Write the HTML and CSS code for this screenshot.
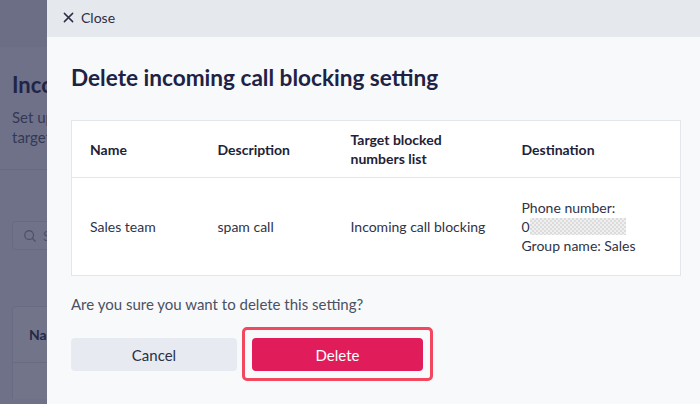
FILE: index.html
```html
<!DOCTYPE html>
<html lang="en">
<head>
<meta charset="utf-8">
<title>Delete incoming call blocking setting</title>
<link rel="stylesheet" href="styles.css">
</head>
<body>
<div class="page">
  <header class="page-header"></header>
  <main class="page-main">
    <h1 class="page-title">Incoming call blocking</h1>
    <p class="page-desc">Set up incoming call blocking<br>target blocked numbers list.</p>
    <hr class="page-sep">
    <div class="search">
      <svg class="search-icon" viewBox="0 0 16 16" width="14" height="14"><circle cx="7" cy="7" r="5" fill="none" stroke="#9aa0ad" stroke-width="1.5"/><path d="M10.6 10.6 L14 14" stroke="#9aa0ad" stroke-width="1.5" stroke-linecap="round"/></svg>
      <span class="search-ph">Search</span>
    </div>
    <div class="page-card">
      <div class="page-card-head">Name</div>
    </div>
  </main>
</div>
<div class="overlay"></div>
<section class="modal">
  <div class="modal-top">
    <button class="close-btn">
      <svg viewBox="0 0 12 12" width="11" height="11"><path d="M1.5 1.5 L10.5 10.5 M10.5 1.5 L1.5 10.5" stroke="#2b2f45" stroke-width="1.6" stroke-linecap="round"/></svg>
      <span>Close</span>
    </button>
  </div>
  <div class="modal-body">
    <h2 class="modal-title">Delete incoming call blocking setting</h2>
    <table class="info-table">
      <colgroup>
        <col class="c1"><col class="c2"><col class="c3"><col class="c4">
      </colgroup>
      <thead>
        <tr>
          <th>Name</th>
          <th>Description</th>
          <th>Target blocked<br>numbers list</th>
          <th>Destination</th>
        </tr>
      </thead>
      <tbody>
        <tr>
          <td>Sales team</td>
          <td>spam call</td>
          <td>Incoming call blocking</td>
          <td>Phone number:<br>0<span class="redacted"></span><br>Group name: Sales</td>
        </tr>
      </tbody>
    </table>
    <p class="question">Are you sure you want to delete this setting?</p>
    <div class="actions">
      <button class="btn btn-cancel">Cancel</button>
      <button class="btn btn-delete">Delete</button>
    </div>
  </div>
</section>
</body>
</html>
```

FILE: styles.css
```css
html, body {
  margin: 0;
  padding: 0;
}
body {
  width: 700px;
  height: 404px;
  overflow: hidden;
  position: relative;
  font-family: "Lato", "Noto Sans", sans-serif;
  color: #2b2f45;
  background: #f6f7f9;
}
.page {
  width: 47px;
  height: 404px;
  overflow: hidden;
}
.page-header {
  height: 47px;
  background: #eceef2;
}
.page-main {
  width: 400px;
  padding: 26px 12px 0;
}
.page-title {
  margin: 0;
  font-size: 22px;
  font-weight: 700;
  color: #1e2244;
  line-height: 24px;
  white-space: nowrap;
}
.page-desc {
  margin: 10px 0 0;
  font-size: 15px;
  line-height: 20px;
  color: #555a6e;
  white-space: nowrap;
}
.page-sep {
  margin: 22px -12px 0;
  border: 0;
  border-top: 1px solid #dfe2e8;
}
.search {
  margin-top: 51px;
  width: 260px;
  height: 29px;
  border: 1px solid #e0e3e8;
  border-radius: 4px;
  background: #f8f9fb;
  display: flex;
  align-items: center;
  gap: 6px;
  padding-left: 10px;
  box-sizing: border-box;
}
.search-ph {
  font-size: 14px;
  color: #9aa0ad;
}
.page-card {
  margin-top: 56px;
  background: #ffffff;
  border: 1px solid #e3e6eb;
  border-bottom: 0;
  border-radius: 4px 4px 0 0;
  height: 92px;
}
.page-card-head {
  height: 55px;
  border-bottom: 1px solid #e3e6eb;
  display: flex;
  align-items: center;
  padding-left: 16px;
  font-weight: 700;
  font-size: 14px;
}
.overlay {
  position: absolute;
  inset: 0;
  background: rgba(35, 37, 72, 0.64);
}
.modal {
  position: absolute;
  top: 0;
  left: 47px;
  width: 653px;
  height: 404px;
  background: #f8f9fb;
}
.modal-top {
  height: 37px;
  box-sizing: border-box;
  padding: 0 0 3px 16px;
  background: #e5e8ec;
  display: flex;
  align-items: center;
}
.close-btn {
  border: 0;
  background: none;
  padding: 0;
  display: flex;
  align-items: center;
  gap: 7px;
  font-family: inherit;
  font-size: 14px;
  color: #2b2f45;
  cursor: pointer;
}
.modal-body {
  padding: 26px 19px 0 24px;
}
.modal-title {
  margin: 0;
  font-size: 22.6px;
  line-height: 30px;
  font-weight: 700;
  color: #1e2244;
}
.info-table {
  margin-top: 27px;
  width: 610px;
  border-collapse: collapse;
  background: #ffffff;
  border: 1px solid #e3e6eb;
  font-size: 14px;
  table-layout: fixed;
}
.c1 { width: 128px; }
.c2 { width: 133px; }
.c3 { width: 171px; }
.info-table th {
  text-align: left;
  font-weight: 700;
  color: #1e2238;
  height: 56px;
  padding: 0 0 0 18px;
  line-height: 19px;
  border-bottom: 1px solid #e3e6eb;
  vertical-align: middle;
}
.info-table td {
  height: 97px;
  padding: 0 0 0 18px;
  line-height: 19px;
  color: #2f3347;
  vertical-align: middle;
}
.redacted {
  display: inline-block;
  width: 96px;
  height: 17px;
  vertical-align: -3px;
  background-color: #e9e9e9;
  background-image: repeating-conic-gradient(#dcdcdc 0 25%, #efefef 0 50%);
  background-size: 4px 4px;
}
.question {
  margin: 18px 0 0;
  font-size: 15px;
  line-height: 20px;
  color: #4b5063;
}
.actions {
  margin-top: 24px;
  display: flex;
  gap: 15px;
}
.btn {
  height: 33px;
  border: 0;
  border-radius: 4px;
  font-family: inherit;
  font-size: 15px;
  cursor: pointer;
}
.btn-cancel {
  width: 166px;
  background: #e7ebf1;
  color: #2b2f45;
}
.btn-delete {
  position: relative;
  width: 171px;
  background: #e01c5a;
  color: #ffffff;
}
.btn-delete::after {
  content: "";
  position: absolute;
  inset: -11px -10px -10px -10px;
  border: 3px solid #f2475f;
  border-radius: 5px;
  pointer-events: none;
}
```
